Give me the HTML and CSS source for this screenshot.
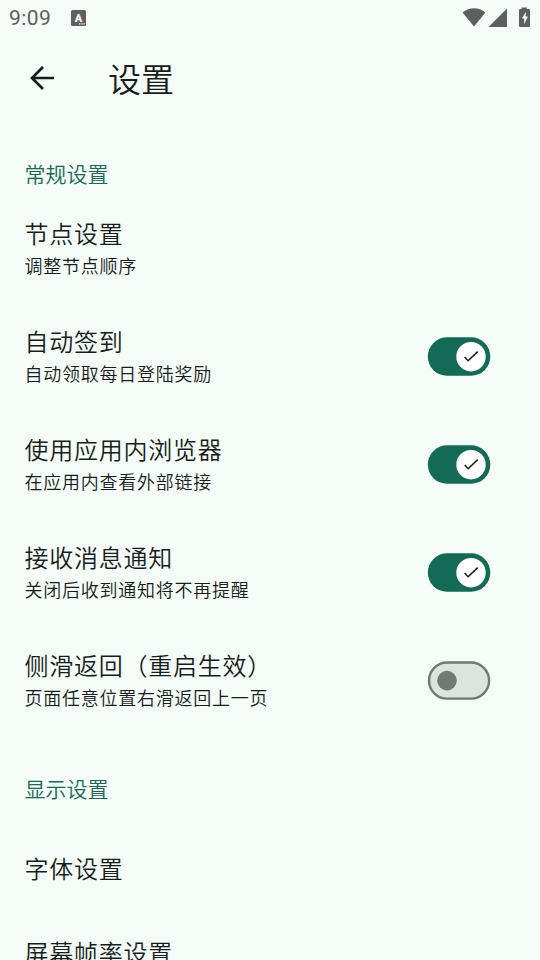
FILE: index.html
```html
<!DOCTYPE html>
<html lang="zh-CN">
<head>
<meta charset="utf-8">
<title>设置</title>
<link rel="stylesheet" href="styles.css">
</head>
<body>
<svg width="0" height="0" class="defs">
  <symbol id="switch-on" viewBox="0 0 64 40"><rect x=".8" y=".3" width="62.500" height="38.500" rx="19.250" fill="#146b55"/><circle cx="44" cy="19.700" r="14.700" fill="#fff"/><path d="m37.700 20 3.400 3.700 9.600-9.100" fill="none" stroke="#171d1a" stroke-width="1.500"/></symbol>
  <symbol id="switch-off" viewBox="0 0 64 40"><rect x="2" y="1.500" width="60.100" height="36.100" rx="18.050" fill="#dde4df" stroke="#707974" stroke-width="2.400"/><circle cx="20" cy="19.600" r="9.800" fill="#707974"/></symbol>
</svg>
<div class="status">
  <span class="clock">9:09</span>
  <svg class="input-icon" width="15" height="16" viewBox="0 0 15 16"><rect width="15" height="16" rx="1.5" fill="#5d605e"/><text x="7.400" y="12">A</text><path d="M8 13.900h1.300M10.300 13.900h1.300M12.500 13.900h1.300" stroke="#f5fbf7" stroke-width="1.300"/></svg>
  <svg class="signals" width="70" height="22" viewBox="0 0 70 22" fill="#5d605e"><path d="M2.5 5.5C9-.2 19-.2 25.5 5.5L14 19.6Z"/><path d="M47 1.5V20H28.5Z"/><path d="M61.6.5h5.2v1.6h2q1.2 0 1.2 1.2V18.700q0 1.300-1.200 1.300h-8.600Q59 20 59 18.700V3.300q0-1.200 1.200-1.200h1.400Z"/><path d="M66 4.800 61.900 11.500h2.300v5.900l3.600-7.800h-2.300Z" fill="#f5fbf7"/></svg>
</div>
<header class="appbar">
  <svg class="back" width="26" height="26" viewBox="0 0 26 26"><path d="M25 13H3M14 2 3 13 14 24" fill="none" stroke="#171d1a" stroke-width="2.7"/></svg>
  <h1>设置</h1>
</header>
<main>
  <h2>常规设置</h2>
  <div class="row"><div><p class="title">节点设置</p><p class="sub">调整节点顺序</p></div></div>
  <div class="row"><div><p class="title">自动签到</p><p class="sub">自动领取每日登陆奖励</p></div><svg class="switch"><use href="#switch-on"/></svg></div>
  <div class="row"><div><p class="title">使用应用内浏览器</p><p class="sub">在应用内查看外部链接</p></div><svg class="switch"><use href="#switch-on"/></svg></div>
  <div class="row"><div><p class="title">接收消息通知</p><p class="sub">关闭后收到通知将不再提醒</p></div><svg class="switch"><use href="#switch-on"/></svg></div>
  <div class="row"><div><p class="title">侧滑返回（重启生效）</p><p class="sub">页面任意位置右滑返回上一页</p></div><svg class="switch"><use href="#switch-off"/></svg></div>
  <h2 class="display">显示设置</h2>
  <div class="row single"><p class="title">字体设置</p></div>
  <div class="row single"><p class="title">屏幕帧率设置</p></div>
</main>
</body>
</html>
```
FILE: styles.css
```css
* { box-sizing: border-box; }
body {
  margin: 0;
  height: 960px;
  overflow: hidden;
  background: #f5fbf7;
  color: #171d1a;
  font-family: "Noto Sans CJK SC", sans-serif;
  font-weight: 350;
}
h1, h2, p { margin: 0; font-weight: inherit; }
.defs { display: none; }
.status { display: flex; align-items: center; height: 36px; padding: 0 10px 0 9px; }
.clock { width: 62px; font: 400 21px/36px Roboto, sans-serif; letter-spacing: .4px; color: #5d605e; }
.input-icon text { font: 900 11px Roboto, sans-serif; text-anchor: middle; fill: #f5fbf7; }
.signals { margin-left: auto; }
.appbar { display: flex; align-items: center; height: 84px; padding-left: 29px; }
.back { margin-right: 53px; }
h1 { font-size: 33px; line-height: 48px; }
main { padding: 37px 49px 0 24.4px; }
h2 { height: 38px; font-size: 21px; line-height: 32px; color: #146b55; }
.row { display: flex; align-items: center; justify-content: space-between; height: 108px; }
.title { font-size: 24px; line-height: 34px; letter-spacing: .75px; }
.sub { margin-bottom: 3px; font-size: 18px; line-height: 30px; letter-spacing: .75px; }
.display { height: 53.5px; margin-top: 37px; }
.single { height: 84px; }
.switch { width: 64px; height: 40px; }
```
